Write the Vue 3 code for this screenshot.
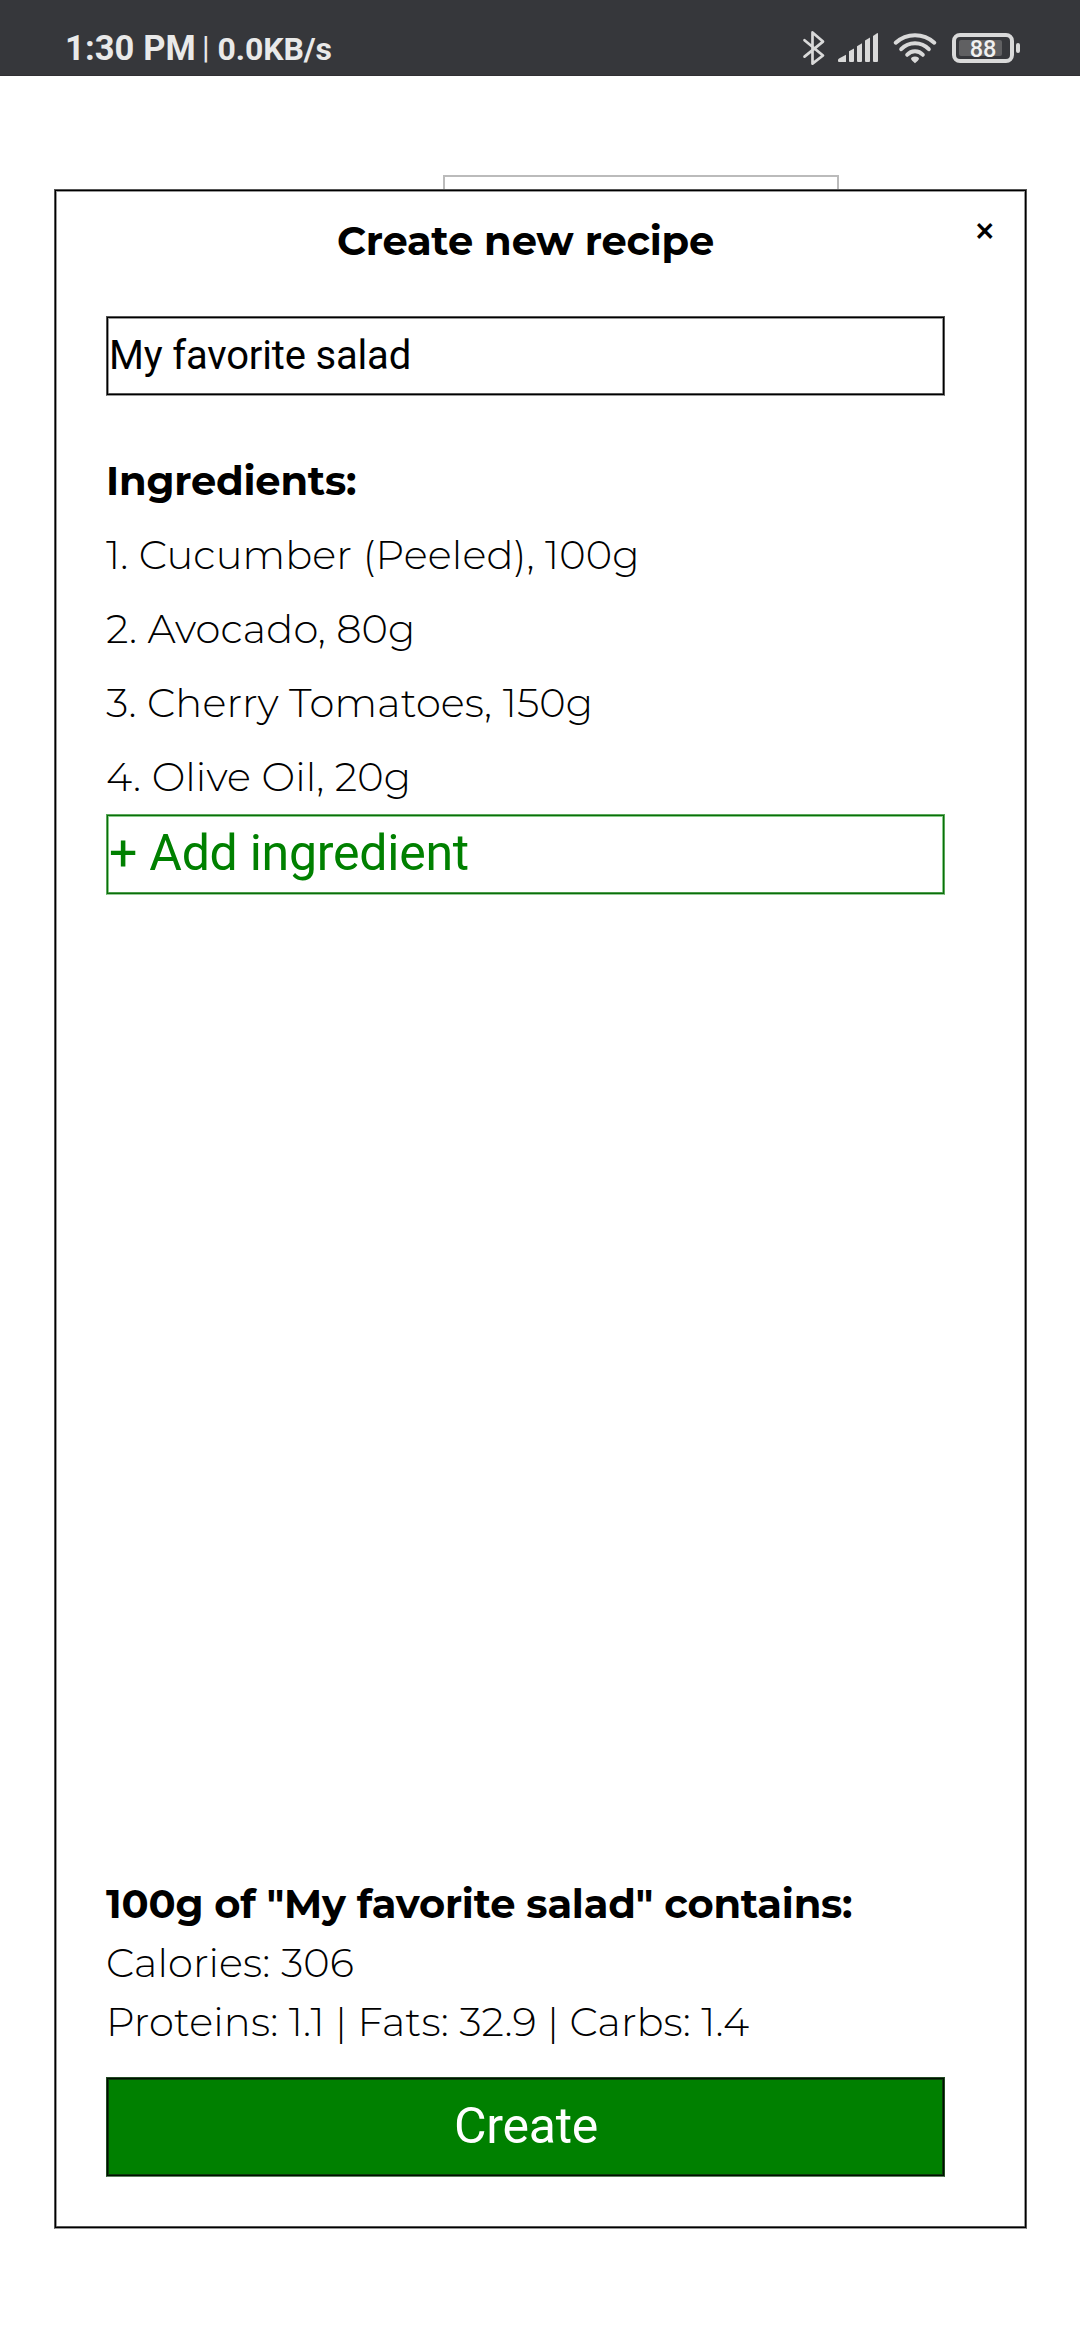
<script setup>
import { ref } from 'vue'

const recipeName = ref('My favorite salad')

const ingredients = [
  '1. Cucumber (Peeled), 100g',
  '2. Avocado, 80g',
  '3. Cherry Tomatoes, 150g',
  '4. Olive Oil, 20g',
]
</script>

<template>
  <div class="screen">
    <header class="status">
      <span class="time">1:30 PM</span>
      <span class="divider">|</span>
      <span class="speed">0.0KB/s</span>
      <svg class="icons" width="220" height="40" viewBox="802 28 220 40">
        <path class="line thin" d="M804.5 40.2L823 55.5L812.5 63.6V32.4L823 41.6L804.5 56.6" />
        <g class="solid">
          <path d="M839 58.5L846 54.7V62H839Q838 62 838 61V60Q838 59 839 58.5Z" />
          <path d="M849 51.2L854 48.4V61Q854 62 853 62H850Q849 62 849 61Z" />
          <path d="M857 46.2L862 43.2V61Q862 62 861 62H858Q857 62 857 61Z" />
          <path d="M865 40.6L870 37.6V61Q870 62 869 62H866Q865 62 865 61Z" />
          <path d="M873 36L877 33.2Q878 32.8 878 34V61Q878 62 877 62H874Q873 62 873 61Z" />
          <path d="M915 56.6Q919 56.8 919 59Q918.6 60.6 915 63.2Q911.4 60.6 911 59Q911 56.8 915 56.6Z" />
          <rect x="1016" y="43" width="4" height="10" rx="2" />
        </g>
        <g class="line">
          <path d="M895.7 42.7A28.5 28.5 0 0 1 934.3 42.7" />
          <path d="M901.2 49.2A19 19 0 0 1 928.8 49.2" />
          <path d="M907.2 54.8A10.2 10.2 0 0 1 922.8 54.8" />
          <rect x="954" y="35" width="58" height="26" rx="6" />
        </g>
        <rect class="charge" x="959" y="40" width="43" height="16" rx="2" />
        <text class="level" x="983" y="57" text-anchor="middle">88</text>
      </svg>
    </header>

    <main class="page">
      <div class="backdrop-field"></div>

      <section class="modal">
        <button class="close" type="button">×</button>
        <h1 class="title">Create new recipe</h1>
        <div class="field">{{ recipeName }}</div>
        <h2 class="subtitle">Ingredients:</h2>
        <p v-for="item in ingredients" :key="item" class="item">{{ item }}</p>
        <button class="add" type="button">+ Add ingredient</button>

        <footer class="summary">
          <h2 class="contains">100g of "{{ recipeName }}" contains:</h2>
          <p>Calories: 306</p>
          <p>Proteins: 1.1 | Fats: 32.9 | Carbs: 1.4</p>
          <button class="create" type="button">Create</button>
        </footer>
      </section>
    </main>
  </div>
</template>

<style>
body {
  margin: 0;
  background: #fff;
}
</style>

<style scoped>
.screen {
  display: flex;
  flex-direction: column;
  height: 2340px;
  background: #fff;
  color: #000;
  font-family: Montserrat, Inter, sans-serif;
  font-size: 40px;
  overflow: hidden;
}

h1,
h2,
p {
  margin: 0;
  font-size: inherit;
  white-space: nowrap;
}

h1,
h2 {
  font-weight: 700;
  letter-spacing: -0.2px;
}

p {
  font-weight: 300;
  letter-spacing: 0.13px;
}

button {
  display: block;
  padding: 0;
  margin: 0;
  border: 0;
  background: none;
  font: inherit;
  text-align: left;
}

.status {
  box-sizing: border-box;
  display: flex;
  flex: none;
  align-items: flex-start;
  height: 76px;
  padding-left: 65px;
  padding-right: 58px;
  background: #36373b;
  border-bottom: 1px solid #302f33;
  color: #e9e9e9;
  font-family: Roboto, sans-serif;
  line-height: 40px;
}

.time {
  width: 137px;
  margin-top: 28px;
  font-size: 34.5px;
  font-weight: 700;
  letter-spacing: 0.1px;
}

.divider {
  width: 15.5px;
  margin-top: 28px;
  font-size: 31px;
}

.speed {
  margin-top: 29px;
  font-size: 32px;
  font-weight: 700;
  letter-spacing: -0.1px;
}

.icons {
  margin-top: 28px;
  margin-left: auto;
}

.solid {
  fill: #d9d9d9;
}

.line {
  fill: none;
  stroke: #d9d9d9;
  stroke-width: 4;
  stroke-linecap: round;
}

.thin {
  stroke-width: 2.7;
  stroke-linejoin: round;
}

.charge {
  fill: #606062;
}

.level {
  fill: #f0f0f0;
  font: 500 23.5px Roboto, sans-serif;
}

.page {
  position: relative;
  flex: 1;
}

.backdrop-field {
  box-sizing: border-box;
  width: 396px;
  height: 80px;
  margin: 99px 0 0 443px;
  border: 2px solid #bbb;
}

.modal {
  position: absolute;
  top: 113px;
  left: 54px;
  box-sizing: border-box;
  display: flex;
  flex-direction: column;
  width: 973px;
  height: 2040px;
  padding: 21px 81px 51px 51px;
  background: #fff;
  border: 1px solid #555;
  border-bottom-color: #999;
  box-shadow: inset 0 0 0 1px #000, inset 0 -2px 0 #555, inset 0 0 0 2px #999;
}

.close {
  position: absolute;
  top: 21px;
  left: 917.5px;
  font-size: 42px;
  font-weight: 500;
  line-height: 40px;
  color: #000;
}

.title {
  line-height: 60px;
  text-align: center;
}

.field {
  box-sizing: border-box;
  height: 80px;
  margin-top: 45px;
  padding-left: 2px;
  border: 1px solid #555;
  border-bottom-color: #999;
  box-shadow: inset 0 0 0 1px #000, inset 0 -2px 0 #555, inset 0 0 0 2px #999;
  font-family: Roboto, sans-serif;
  font-size: 40px;
  line-height: 78px;
  letter-spacing: -0.17px;
}

.subtitle {
  margin-top: 48px;
  line-height: 74px;
}

.item {
  line-height: 74px;
}

.add {
  box-sizing: border-box;
  height: 81px;
  padding: 0 0 3px 2px;
  border: 1px solid #5aa85a;
  border-bottom-color: #9c9;
  box-shadow: inset 0 0 0 1px #0b6e0b, inset 0 -2px 0 #4a9c4a, inset 0 0 0 2px #8c8;
  color: #008000;
  font-family: Roboto, sans-serif;
  font-size: 50px;
  line-height: 76px;
  letter-spacing: -0.25px;
}

.summary {
  display: flex;
  flex-direction: column;
  margin-top: auto;
  line-height: 59px;
}

.create {
  box-sizing: border-box;
  height: 100px;
  margin-top: 26px;
  padding: 0 0 1px 1px;
  background: #008000;
  border: 1px solid #234a23;
  border-bottom-color: #5d7f5d;
  box-shadow: inset 0 0 0 1px #001000, inset 0 0 0 2px #0a3a0a;
  color: #fff;
  font-family: Roboto, sans-serif;
  font-size: 50px;
  line-height: 97px;
  letter-spacing: -0.28px;
  text-align: center;
}
</style>
